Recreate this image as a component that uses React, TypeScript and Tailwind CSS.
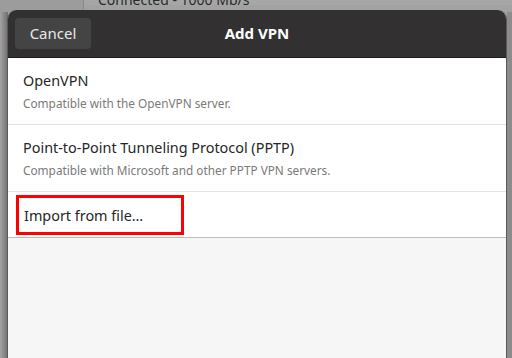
export default function App() {
  const rows = [
    { title: "OpenVPN", sub: "Compatible with the OpenVPN server." },
    {
      title: "Point-to-Point Tunneling Protocol (PPTP)",
      sub: "Compatible with Microsoft and other PPTP VPN servers.",
    },
  ];

  return (
    <div
      className="w-[512px] h-[358px] overflow-hidden bg-[#a2a2a2] relative"
      style={{ fontFamily: '"Noto Sans", "Open Sans", sans-serif' }}
    >
      {/* Window behind */}
      <div className="absolute top-0 left-0 w-full h-[12px] flex">
        <div className="w-[84px] h-full bg-[#9c9c9c] border-r border-[#8a8a8a]"></div>
        <div className="flex-1 h-full bg-[#a6a6a6] pl-[14px] text-[14px] leading-none text-[#2a2a2a] -mt-[7px]">
          Connected - 1000 Mb/s
        </div>
      </div>
      <div className="absolute right-0 top-[12px] w-[5px] h-[346px] bg-[#8c8c8c]"></div>
      <div className="absolute left-0 top-[12px] w-[8px] h-[346px] bg-gradient-to-r from-[#a4a4a4] to-[#6e6e6e]"></div>

      {/* Dialog */}
      <div className="absolute left-[7px] top-[10px] w-[500px] h-[360px] rounded-t-[9px] overflow-hidden flex flex-col border-x border-[#5a5a5a] bg-[#f6f6f6]">
        <div className="h-[48px] bg-[#323031] flex items-center px-[7px] relative shrink-0 border-b border-[#1e1e1e]">
          <button className="w-[76px] h-[31px] rounded-[4px] bg-[#454444] text-[#e8e8e8] text-[15px]">
            Cancel
          </button>
          <div className="absolute left-0 right-0 text-center text-white font-bold text-[15px] pointer-events-none">
            Add VPN
          </div>
        </div>

        <div className="bg-white">
          {rows.map((r) => (
            <div key={r.title} className="h-[67px] border-b border-[#e3e3e3] pl-[15px] pt-[13px]">
              <div className="text-[14.4px] text-[#262626] leading-[20px]">{r.title}</div>
              <div className="text-[11.8px] text-[#7a7a7a] leading-[16px] mt-[4px]">{r.sub}</div>
            </div>
          ))}
          <div className="h-[46px] border-b border-[#bdbdbd] flex items-center pl-[8px]">
            <div className="w-[168px] h-[40px] border-[3px] border-[#ff0000] flex items-center pl-[5px] pt-[2px] text-[14.4px] text-[#262626]">
              Import from file…
            </div>
          </div>
        </div>
      </div>
    </div>
  );
}
